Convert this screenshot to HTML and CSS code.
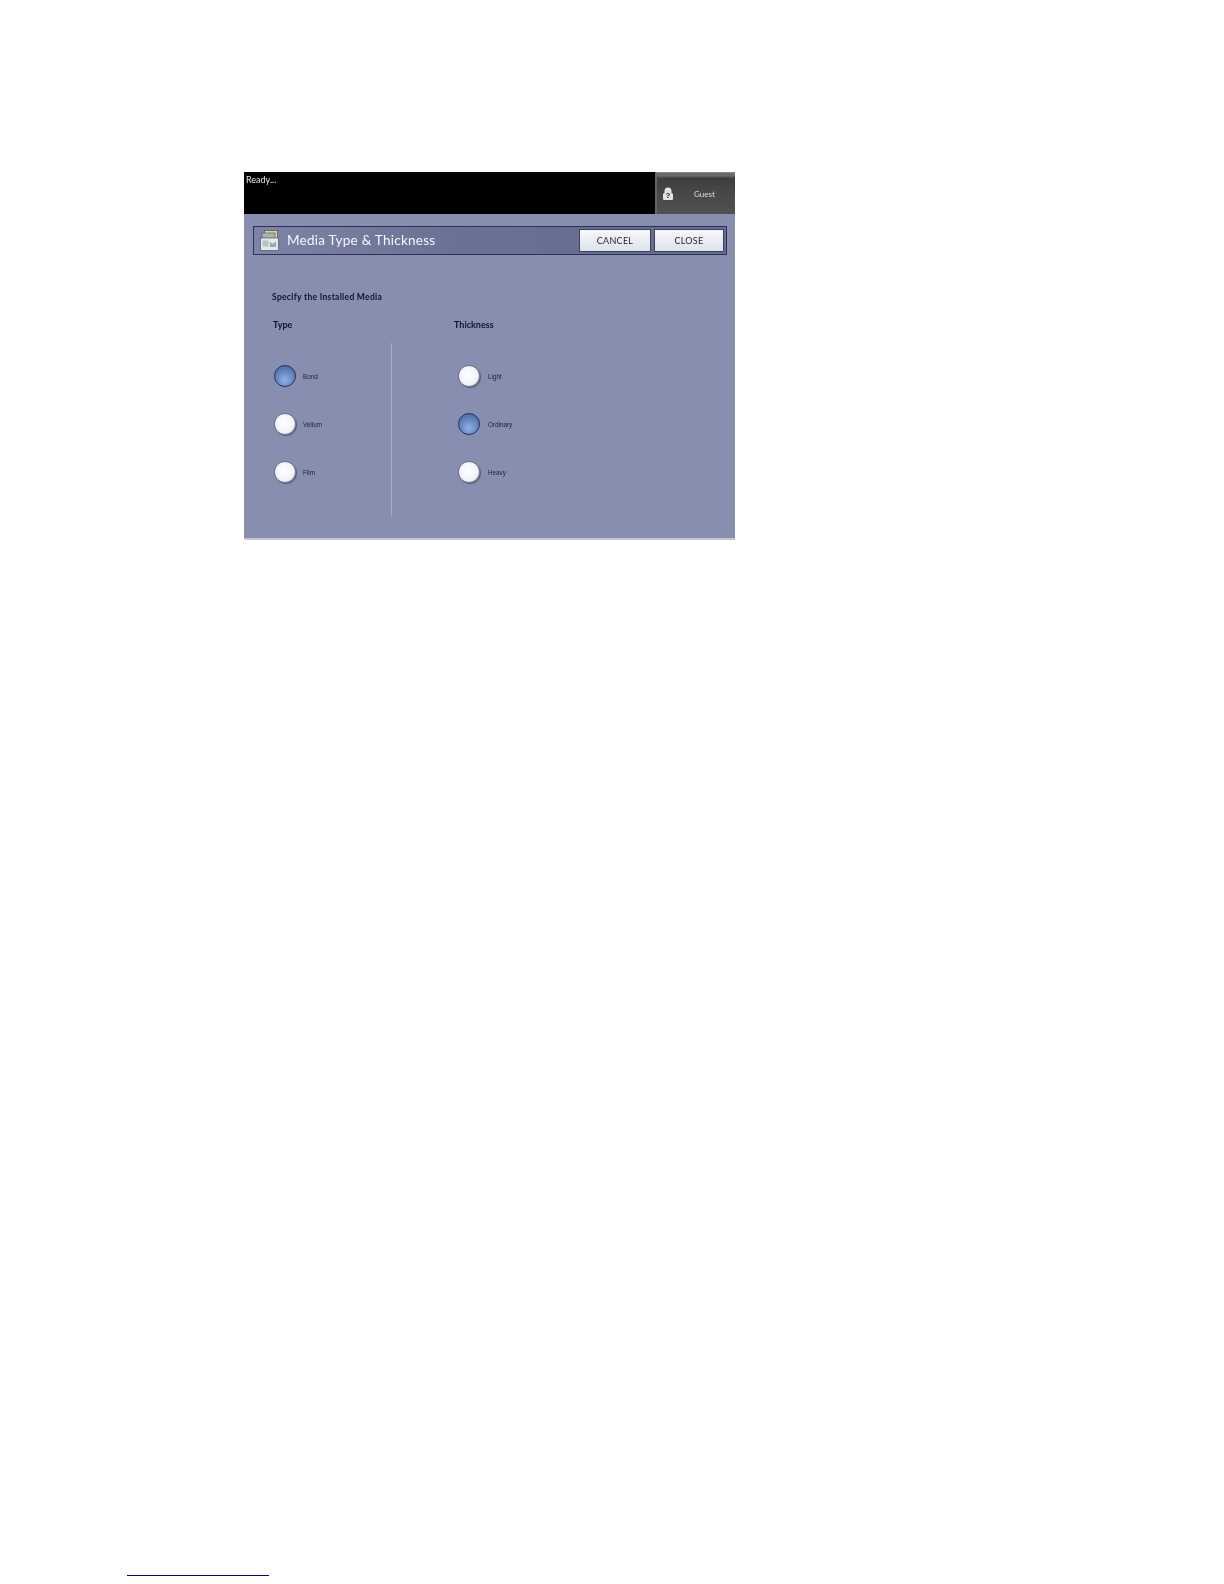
FILE: index.html
```html
<!DOCTYPE html>
<html lang="en">

<head>
  <meta charset="UTF-8" />
  <title>Media Type &amp; Thickness</title>
  <link rel="stylesheet" href="styles.css">
</head>

<body>
  <div class="screen">
    <!-- status bar -->
    <div class="status">
      <span class="ready">Ready...</span>
      <div class="guest">
        <svg class="lock" width="10" height="13" viewBox="0 0 10 13">
          <path d="M1.500 6V4a3.500 3.500 0 0 1 7 0v2l1.500 1v5a1 1 0 0 1-1 1H1a1 1 0 0 1-1-1V7z" fill="#e4e4e4" />
          <text x="5" y="11" text-anchor="middle" class="lock-mark">?</text>
        </svg>
        <span>Guest</span>
      </div>
    </div>

    <div class="panel">
      <!-- title bar -->
      <div class="titlebar">
        <svg class="media-icon" width="20" height="21" viewBox="0 0 20 21">
          <rect x="4.500" y="0.500" width="13" height="15" fill="#d8d3a0" stroke="#55564a" stroke-width="0.7" />
          <rect x="2" y="3" width="13" height="15" fill="#a3b5ac" stroke="#56655f" stroke-width="0.7" />
          <rect x="0.500" y="8" width="18" height="12.500" fill="#e3e8e8" stroke="#4f5666" stroke-width="0.7" />
          <path d="M2.500 10.500h6v6h-6z" fill="#b5c2c4" />
          <path d="M10 12l3 2 3-3v6h-6z" fill="#98a8ac" />
        </svg>
        <h1>Media Type &amp; Thickness</h1>
        <button class="btn">CANCEL</button>
        <button class="btn">CLOSE</button>
      </div>

      <p class="specify">Specify the Installed Media</p>

      <div class="groups">
        <div class="group group-type">
          <h2>Type</h2>
          <div class="options">
            <div class="option"><i class="radio on"></i><span>Bond</span></div>
            <div class="option"><i class="radio"></i><span>Vellum</span></div>
            <div class="option"><i class="radio"></i><span>Film</span></div>
          </div>
        </div>
        <div class="group group-thick">
          <h2>Thickness</h2>
          <div class="options">
            <div class="option"><i class="radio"></i><span>Light</span></div>
            <div class="option"><i class="radio on"></i><span>Ordinary</span></div>
            <div class="option"><i class="radio"></i><span>Heavy</span></div>
          </div>
        </div>
      </div>
    </div>
  </div>

  <div class="footnote-rule"></div>
</body>

</html>
```
FILE: styles.css
```css
* {
  margin: 0;
  padding: 0;
  box-sizing: border-box;
}

body {
  width: 1224px;
  height: 1584px;
  background: #fff;
  font-family: "Lato", "Open Sans", sans-serif;
  padding-top: 172px;
  overflow: hidden;
}

/* the source is a soft scan, so everything is slightly blurred */
.screen {
  width: 491px;
  height: 368px;
  margin-left: 244px;
  background: #888eb0;
  border-bottom: 2px solid #c3c6d4;
  filter: blur(0.35px);
}

.status {
  height: 42px;
  background: #000;
  display: flex;
  justify-content: space-between;
}

.ready {
  color: #e8e8e8;
  font-size: 9px;
  padding: 2px 0 0 2px;
}

.guest {
  width: 80px;
  display: flex;
  align-items: center;
  gap: 21px;
  padding-left: 6px;
  color: #ddd;
  font-size: 8px;
  background: linear-gradient(#6a6a6a, #6a6a6a 3px, #3e3e3e 5px, #484848 50%, #505050);
  border-left: 2px solid #666;
  border-top: 1px solid #888;
}

.lock-mark {
  font: bold 8px "Liberation Sans", sans-serif;
  fill: #222;
}

.panel {
  padding: 12px 8px 0 9px;
}

.titlebar {
  height: 29px;
  display: flex;
  align-items: center;
  padding: 0 2px 0 6px;
  border: 1px solid #2b3153;
  background: linear-gradient(90deg, #7e84a6, #6a7093 45%, #666c8e);
}

.media-icon {
  margin-right: 7px;
}

.titlebar h1 {
  flex: 1;
  color: #f6f7fa;
  font-size: 13.500px;
  font-weight: 400;
  letter-spacing: 0.25px;
  padding-bottom: 2px;
}

.btn {
  width: 72px;
  height: 23px;
  margin-left: 3px;
  border: 1px solid #3c4160;
  background: linear-gradient(#f6f7fa, #dfe2ec);
  color: #1d2030;
  font: 400 9px "Lato", "Open Sans", sans-serif;
  letter-spacing: 0.3px;
}

.btn:last-child {
  width: 70px;
}

.specify {
  margin: 37px 0 0 19px;
  color: #10142c;
  font-size: 8.500px;
  font-weight: 700;
  letter-spacing: 0.3px;
  line-height: 11px;
}

.groups {
  display: flex;
  margin-top: 16px;
}

.group h2 {
  color: #10142c;
  font-size: 9px;
  font-weight: 700;
  line-height: 11px;
}

.group-type {
  width: 139px;
  padding-left: 20px;
}

.group-thick {
  width: 200px;
}

.group-thick h2 {
  margin-left: 62px;
}

.options {
  height: 174px;
  margin-top: 13px;
  padding-top: 22px;
  display: flex;
  flex-direction: column;
  gap: 26px;
}

.group-type .options {
  padding-left: 1px;
  border-right: 1px solid #a6abc4;
}

.group-thick .options {
  padding-left: 66px;
}

.group-thick .option {
  gap: 8px;
}

.option {
  height: 22px;
  display: flex;
  align-items: center;
  gap: 7px;
  color: #1b2038;
  font: 6.300px "Liberation Sans", sans-serif;
}

.radio {
  width: 22px;
  height: 22px;
  border-radius: 50%;
  border: 1px solid #6f7388;
  background: radial-gradient(circle at 45% 40%, #fff, #f0f2f7 65%, #d5d8e2);
  box-shadow: 1px 1px 1px #5c6078;
}

.radio.on {
  border: 1px solid #1f2f66;
  background: radial-gradient(circle at 50% 70%, #8fb0e4, #6383bc 55%, #3f5a96);
  box-shadow: none;
}

.footnote-rule {
  width: 142px;
  height: 1px;
  margin: 1035px 0 0 127px;
  background: #00009a;
}
```
